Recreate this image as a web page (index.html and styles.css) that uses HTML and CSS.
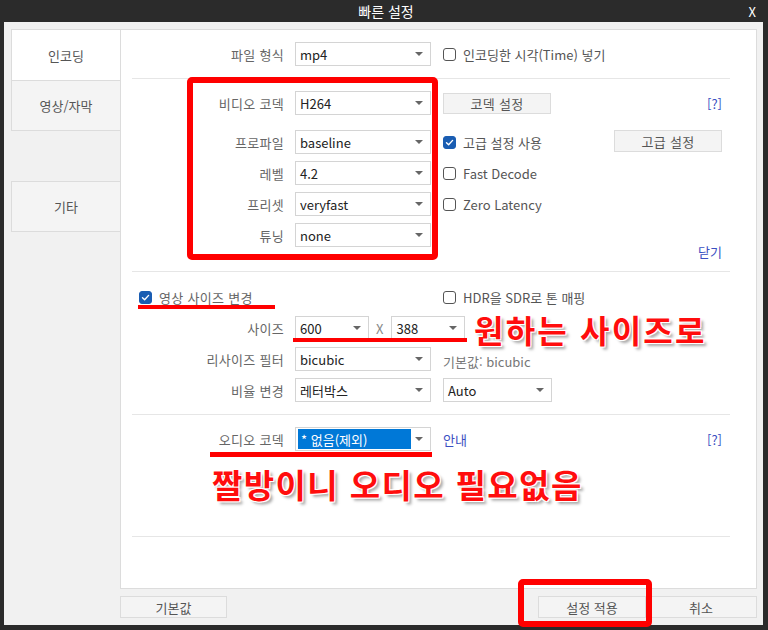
FILE: index.html
```html
<!DOCTYPE html>
<html lang="ko">
<head>
<meta charset="utf-8">
<title>빠른 설정</title>
<link rel="stylesheet" href="styles.css">
</head>
<body>
<div class="window">
  <div class="titlebar">
    <span></span>
    <span class="title">빠른 설정</span>
    <span class="close">X</span>
  </div>
  <div class="client">
    <div class="main">
      <div class="tabs">
        <div class="tab active">인코딩</div>
        <div class="tab second">영상/자막</div>
        <div class="tab-gap"></div>
        <div class="tab third">기타</div>
      </div>
      <div class="panel">
        <div class="section s1">
          <div class="row">
            <div class="label">파일 형식</div>
            <div class="select">mp4</div>
            <div class="right">
              <span class="check"></span><span>인코딩한 시각(Time) 넣기</span>
            </div>
          </div>
        </div>
        <div class="section s2">
          <div class="row r1">
            <div class="label">비디오 코덱</div>
            <div class="select">H264</div>
            <div class="right">
              <div class="btn">코덱 설정</div>
              <span class="help">[?]</span>
            </div>
          </div>
          <div class="row r2">
            <div class="label">프로파일</div>
            <div class="select">baseline</div>
            <div class="right">
              <span class="check on"><svg viewBox="0 0 13 13" width="13" height="13"><path d="M3.5 6.8 L5.6 8.8 L9.6 4.4" fill="none" stroke="#fff" stroke-width="1.4" stroke-linecap="round" stroke-linejoin="round"/></svg></span><span>고급 설정 사용</span>
              <div class="btn btn-adv">고급 설정</div>
            </div>
          </div>
          <div class="row r3">
            <div class="label">레벨</div>
            <div class="select">4.2</div>
            <div class="right">
              <span class="check"></span><span>Fast Decode</span>
            </div>
          </div>
          <div class="row r3">
            <div class="label">프리셋</div>
            <div class="select">veryfast</div>
            <div class="right">
              <span class="check"></span><span>Zero Latency</span>
            </div>
          </div>
          <div class="row r3">
            <div class="label">튜닝</div>
            <div class="select">none</div>
          </div>
          <div class="row close-row">
            <span class="help">닫기</span>
          </div>
        </div>
        <div class="section s3">
          <div class="row r-check">
            <div class="resize-check">
              <span class="check on"><svg viewBox="0 0 13 13" width="13" height="13"><path d="M3.5 6.8 L5.6 8.8 L9.6 4.4" fill="none" stroke="#fff" stroke-width="1.4" stroke-linecap="round" stroke-linejoin="round"/></svg></span><span>영상 사이즈 변경</span>
            </div>
            <div class="right hdr">
              <span class="check"></span><span>HDR을 SDR로 톤 매핑</span>
            </div>
          </div>
          <div class="row r3">
            <div class="label">사이즈</div>
            <div class="select small">600</div>
            <span class="times">X</span>
            <div class="select small">388</div>
          </div>
          <div class="row r3">
            <div class="label">리사이즈 필터</div>
            <div class="select">bicubic</div>
            <div class="right">
              <span class="hint">기본값: bicubic</span>
            </div>
          </div>
          <div class="row r3">
            <div class="label">비율 변경</div>
            <div class="select">레터박스</div>
            <div class="right">
              <div class="select auto">Auto</div>
            </div>
          </div>
        </div>
        <div class="section s4">
          <div class="row">
            <div class="label">오디오 코덱</div>
            <div class="select hlsel"><span class="hl">* 없음(제외)</span></div>
            <div class="right">
              <span class="help link">안내</span>
              <span class="help">[?]</span>
            </div>
          </div>
        </div>
      </div>
    </div>
    <div class="footer">
      <div class="fbtn default">기본값</div>
      <div class="fbtn apply">설정 적용</div>
      <div class="fbtn cancel">취소</div>
    </div>
  </div>

  <div class="redbox box1"></div>
  <div class="redbox box2"></div>
  <div class="underline ul1"></div>
  <div class="underline ul2"></div>
  <div class="underline ul3"></div>
  <div class="note note1">원하는 사이즈로</div>
  <div class="note note2">짤방이니 오디오 필요없음</div>
</div>
</body>
</html>
```

FILE: styles.css
```css
* { box-sizing: border-box; }

body {
  margin: 0;
  background: #2b2b2b;
  font-family: "Noto Sans CJK KR", "Noto Sans", sans-serif;
  font-size: 13px;
  color: #555;
}

.window {
  position: relative;
  width: 768px;
  height: 630px;
  background: #2b2b2b;
  display: flex;
  flex-direction: column;
  overflow: hidden;
}

.titlebar {
  height: 22px;
  display: grid;
  grid-template-columns: 1fr auto 1fr;
  align-items: center;
  color: #fff;
  font-size: 14px;
  line-height: 1;
}

.title { padding-left: 4px; }

.close {
  justify-self: end;
  padding-right: 12px;
  font-size: 13px;
}

.client {
  margin: 0 5px 5px 4px;
  background: #f1f1f1;
  padding: 7px 6px 7px 7px;
  flex: 1;
  display: flex;
  flex-direction: column;
  gap: 7px;
}

.main {
  height: 560px;
  display: flex;
}

.tabs {
  width: 109px;
  display: flex;
  flex-direction: column;
}

.tab {
  height: 51px;
  display: flex;
  align-items: center;
  justify-content: center;
  border: 1px solid #dcdcdc;
  border-right: none;
  background: #f4f4f4;
  color: #555;
}

.tab.active {
  background: #fff;
  border-bottom: none;
}

.tab.second { height: 51px; }
.tab-gap { height: 50px; }
.tab.third { height: 51px; }

.panel {
  flex: 1;
  background: #fff;
  border: 1px solid #dcdcdc;
}

.section {
  margin: 0 26px 0 11px;
  border-bottom: 1px solid #e6e6e6;
}

.s1 { padding: 12px 0 12px; }
.s2 { padding: 12px 0 12px; }
.s3 { padding: 13px 0 12px; }
.s4 { padding: 12px 0 85px; }

.row {
  display: flex;
  align-items: center;
  height: 24px;
}

.r2 { margin-top: 15px; }
.r3 { margin-top: 7px; }

.close-row {
  height: 16px;
  margin-top: -4px;
  justify-content: flex-end;
  padding-right: 8px;
}

.label {
  width: 152px;
  margin-right: 11px;
  text-align: right;
  color: #666;
  white-space: nowrap;
  letter-spacing: 0.3px;
}

.select {
  width: 136px;
  height: 24px;
  border: 1px solid #d4d4d4;
  background: #fff;
  display: flex;
  align-items: center;
  padding-left: 4px;
  color: #222;
  white-space: nowrap;
  flex: none;
}

.select::after {
  content: "";
  margin-left: auto;
  margin-right: 7px;
  border-left: 4px solid transparent;
  border-right: 4px solid transparent;
  border-top: 4px solid #666;
}

.select.small { width: 74px; }
.select.auto { width: 109px; }

.times {
  margin: 0 8px 0 7px;
  color: #888;
}

.right {
  margin-left: 12px;
  flex: 1;
  display: flex;
  align-items: center;
  padding-right: 8px;
  white-space: nowrap;
}

.help {
  margin-left: auto;
  color: #3a4fc2;
}

.help.link { margin-left: 0; }

.check {
  width: 13px;
  height: 13px;
  border: 1px solid #555;
  border-radius: 3px;
  margin-right: 7px;
  background: #fff;
  flex: none;
  display: flex;
}

.check.on {
  background: #1a5db2;
  border-color: #1a5db2;
}

.check svg { margin: -1px; }

.btn {
  width: 108px;
  height: 21px;
  border: 1px solid #dcdcdc;
  background: #f4f4f4;
  display: flex;
  align-items: center;
  justify-content: center;
  color: #555;
  flex: none;
  letter-spacing: 0.3px;
}

.btn-adv {
  margin-left: auto;
  height: 22px;
  margin-top: -2px;
}

.resize-check {
  display: flex;
  align-items: center;
  padding-left: 7px;
  width: 311px;
  color: #666;
  letter-spacing: 0.3px;
}

.right.hdr { margin-left: 0; }

.hint {
  color: #777;
  padding-top: 4px;
}

.hlsel { padding-left: 2px; }

.hl {
  background: #0078d7;
  color: #fff;
  width: 113px;
  height: 20px;
  display: flex;
  align-items: center;
  padding-left: 3px;
}

.footer {
  display: flex;
  height: 22px;
}

.fbtn {
  height: 22px;
  border: 1px solid #dcdcdc;
  background: #f4f4f4;
  display: flex;
  align-items: center;
  justify-content: center;
  color: #555;
}

.fbtn.default { margin-left: 109px; width: 107px; }
.fbtn.apply { margin-left: auto; width: 108px; }
.fbtn.cancel { width: 111px; border-left: none; }

/* annotations drawn over the screenshot */
.redbox {
  position: absolute;
  border: 6px solid #ff0000;
  border-radius: 5px;
}

.box1 { left: 187px; top: 77px; width: 251px; height: 183px; }
.box2 { left: 518px; top: 579px; width: 134px; height: 48px; }

.underline {
  position: absolute;
  background: #ff0000;
}

.ul1 { left: 138px; top: 305px; width: 137px; height: 4px; }
.ul2 { left: 293px; top: 338px; width: 174px; height: 4px; }
.ul3 { left: 210px; top: 452px; width: 222px; height: 5px; }

.note {
  position: absolute;
  color: #ff0d0d;
  font-weight: 700;
  font-size: 33px;
  line-height: 29px;
  letter-spacing: 1.4px;
  white-space: nowrap;
  text-shadow: 1px 1px 0 #fff, -1px -1px 0 #fff, 1px -1px 0 #fff, -1px 1px 0 #fff, 3px 3px 3px rgba(0, 0, 0, 0.35);
}

.note1 {
  left: 474px;
  top: 315px;
  font-size: 32px;
  line-height: 28px;
  letter-spacing: 2.2px;
}

.note2 { left: 212px; top: 470px; }
```
